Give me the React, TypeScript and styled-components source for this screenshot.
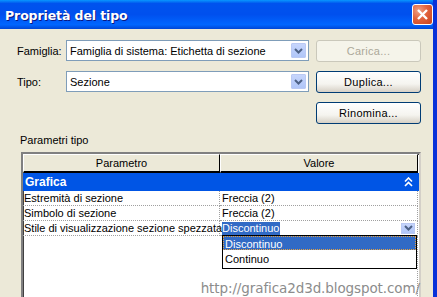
import styled, { createGlobalStyle } from "styled-components";

const GlobalStyle = createGlobalStyle`
  html, body {
    margin: 0;
    padding: 0;
    background: #ece9d8;
  }
  body {
    font-family: "Liberation Sans", Arial, sans-serif;
    font-size: 11px;
    color: #000;
  }
`;

const rows = [
  { name: "Estremità di sezione", value: "Freccia (2)" },
  { name: "Simbolo di sezione", value: "Freccia (2)" },
];

const Chevron = ({ color = "#4d6185" }: { color?: string }) => (
  <svg width="9" height="6" viewBox="0 0 9 6">
    <path d="M1 1 L4.5 4.5 L8 1" stroke={color} strokeWidth="2" fill="none" />
  </svg>
);

const App = () => {
  return (
    <Window>
      <GlobalStyle />
      <TitleBar>
        <Title>Proprietà del tipo</Title>
        <CloseButton>
          <svg width="13" height="13" viewBox="0 0 13 13">
            <path d="M2 2 L11 11 M11 2 L2 11" stroke="#fff" strokeWidth="2.4" />
          </svg>
        </CloseButton>
      </TitleBar>
      <Body>
        <Form>
          <Label>Famiglia:</Label>
          <Combo>
            <ComboText>Famiglia di sistema: Etichetta di sezione</ComboText>
            <ArrowBtn>
              <Chevron />
            </ArrowBtn>
          </Combo>
          <Button disabled>Carica...</Button>

          <Label>Tipo:</Label>
          <Combo>
            <ComboText>Sezione</ComboText>
            <ArrowBtn>
              <Chevron />
            </ArrowBtn>
          </Combo>
          <Button>Duplica...</Button>

          <span />
          <span />
          <Button>Rinomina...</Button>
        </Form>

        <GroupLabel>Parametri tipo</GroupLabel>
        <Grid>
          <HeadCell>Parametro</HeadCell>
          <HeadCell $last>Valore</HeadCell>
          <GroupRow>
            <span>Grafica</span>
            <svg width="9" height="10" viewBox="0 0 9 10">
              <path
                d="M1 4.5 L4.5 1 L8 4.5 M1 9 L4.5 5.5 L8 9"
                stroke="#fff"
                strokeWidth="1.6"
                fill="none"
              />
            </svg>
          </GroupRow>
          {rows.map((r) => (
            <>
              <Cell key={r.name}>{r.name}</Cell>
              <Cell $value key={r.name + "v"}>
                {r.value}
              </Cell>
            </>
          ))}
          <Cell>Stile di visualizzazione sezione spezzata</Cell>
          <Cell $value>
            <Selected>Discontinuo</Selected>
            <SmallArrow>
              <Chevron />
            </SmallArrow>
          </Cell>
          <Filler />
          <Filler $value />
          <DropList>
            <DropItem $active>Discontinuo</DropItem>
            <DropItem>Continuo</DropItem>
          </DropList>
        </Grid>
      </Body>
      <Watermark>http://grafica2d3d.blogspot.com/</Watermark>
    </Window>
  );
};
export default App;

const Window = styled.div`
  position: relative;
  width: 437px;
  height: 297px;
  overflow: hidden;
  background: #ece9d8;
  border-right: 4px solid #0831d9;
  box-sizing: border-box;
`;
const TitleBar = styled.div`
  height: 29px;
  margin-right: -4px;
  display: flex;
  align-items: center;
  justify-content: space-between;
  padding: 0 4px 0 5px;
  background: linear-gradient(
    to bottom,
    #0997ff 0%,
    #0053ee 12%,
    #0050ee 50%,
    #0066ff 85%,
    #0046d5 100%
  );
`;
const Title = styled.span`
  color: #fff;
  font-family: "DejaVu Sans", Verdana, sans-serif;
  font-weight: bold;
  font-size: 12.5px;
  letter-spacing: -0.1px;
  text-shadow: 1px 1px 0 #0a1883;
  margin-top: 1px;
`;
const CloseButton = styled.div`
  width: 19px;
  height: 19px;
  border: 1px solid #fff;
  border-radius: 3px;
  display: flex;
  align-items: center;
  justify-content: center;
  background: radial-gradient(
    circle at 30% 30%,
    #f0a286 0%,
    #e1633d 45%,
    #c8411c 100%
  );
`;
const Body = styled.div`
  padding: 11px 12px 0 17px;
`;
const Form = styled.div`
  display: grid;
  grid-template-columns: 49px 243px 112px;
  grid-auto-rows: 21px;
  row-gap: 10px;
  align-items: center;
  & > button {
    margin-left: 7px;
  }
`;
const Label = styled.span`
  font-size: 11px;
`;
const Combo = styled.div`
  height: 21px;
  box-sizing: border-box;
  border: 1px solid #7f9db9;
  background: #fff;
  display: flex;
  align-items: center;
  justify-content: space-between;
  padding: 1px 1px 1px 3px;
`;
const ComboText = styled.span`
  font-size: 11px;
`;
const ArrowBtn = styled.div`
  width: 15px;
  height: 15px;
  margin-right: 1px;
  box-sizing: border-box;
  border: 1px solid #bac9f3;
  border-radius: 1px;
  background: linear-gradient(to bottom, #c6d5fc, #b0c6f8);
  display: flex;
  align-items: center;
  justify-content: center;
`;
const Button = styled.button`
  height: 22px;
  box-sizing: border-box;
  border: 1px solid ${(p) => (p.disabled ? "#cac8bb" : "#003c74")};
  border-radius: 3px;
  font-family: "Liberation Sans", Arial, sans-serif;
  font-size: 11px;
  letter-spacing: 0.3px;
  padding: 0;
  color: ${(p) => (p.disabled ? "#aca899" : "#000")};
  background: ${(p) =>
    p.disabled
      ? "#f5f4ea"
      : "linear-gradient(to bottom, #ffffff 0%, #f5f4ef 60%, #d6d0c5 100%)"};
`;
const GroupLabel = styled.div`
  margin: 11px 0 0 3px;
  height: 13px;
  line-height: 13px;
`;
const Grid = styled.div`
  position: relative;
  margin: 5px 0 0 4px;
  width: 400px;
  height: 200px;
  box-sizing: border-box;
  border-top: 2px solid #808080;
  border-left: 2px solid #808080;
  border-right: 2px solid #d4d0c8;
  box-shadow: inset 1px 1px 0 #404040;
  display: grid;
  grid-template-columns: 197px 199px;
  grid-template-rows: 19px 18px 15px 15px 15px 1fr;
  background: #fff;
`;
const HeadCell = styled.div<{ $last?: boolean }>`
  background: #ece9d8;
  border-bottom: 2px solid #000;
  border-right: 1px solid #000;
  border-left: 1px solid #fff;
  border-top: 1px solid #fff;
  display: flex;
  align-items: center;
  justify-content: center;
  font-size: 11px;
  margin-right: ${(p) => (p.$last ? "1px" : "0")};
`;
const GroupRow = styled.div`
  grid-column: 1 / 3;
  background: #0055e5;
  color: #fff;
  font-weight: bold;
  font-size: 12px;
  display: flex;
  align-items: center;
  justify-content: space-between;
  padding: 0 6px 0 2px;
`;
const Cell = styled.div<{ $value?: boolean }>`
  border-bottom: 1px dotted #a0a0a0;
  border-right: 1px dotted #a0a0a0;
  display: flex;
  align-items: center;
  justify-content: space-between;
  padding-left: ${(p) => (p.$value ? "2px" : "1px")};
  padding-right: 2px;
  white-space: nowrap;
  font-size: 11px;
  margin-right: ${(p) => (p.$value ? "1px" : "0")};
`;
const Filler = styled.div<{ $value?: boolean }>`
  border-right: ${(p) => (p.$value ? "1px dotted #a0a0a0" : "none")};
  margin-right: ${(p) => (p.$value ? "1px" : "0")};
`;
const Selected = styled.span`
  background: #316ac5;
  color: #fff;
  padding: 0 1px 1px 0;
`;
const SmallArrow = styled.div`
  width: 14px;
  height: 11px;
  box-sizing: border-box;
  border: 1px solid #bac9f3;
  background: linear-gradient(to bottom, #c6d5fc, #b0c6f8);
  display: flex;
  align-items: center;
  justify-content: center;
`;
const DropList = styled.div`
  position: absolute;
  left: 199px;
  top: 81px;
  width: 195px;
  box-sizing: border-box;
  border: 1px solid #000;
  background: #fff;
  padding-bottom: 1px;
`;
const DropItem = styled.div<{ $active?: boolean }>`
  line-height: 14px;
  padding-left: 1px;
  font-size: 11px;
  box-sizing: border-box;
  background: ${(p) => (p.$active ? "#316ac5" : "#fff")};
  color: ${(p) => (p.$active ? "#fff" : "#000")};
  border: 1px dotted ${(p) => (p.$active ? "#e4a040" : "transparent")};
  margin-bottom: ${(p) => (p.$active ? "1px" : "0")};
  height: ${(p) => (p.$active ? "14px" : "16px")};
`;
const Watermark = styled.div`
  position: absolute;
  right: 13px;
  bottom: 1px;
  font-family: "DejaVu Sans", Verdana, sans-serif;
  font-size: 13.5px;
  color: #8c8c8c;
  letter-spacing: -0.1px;
`;
